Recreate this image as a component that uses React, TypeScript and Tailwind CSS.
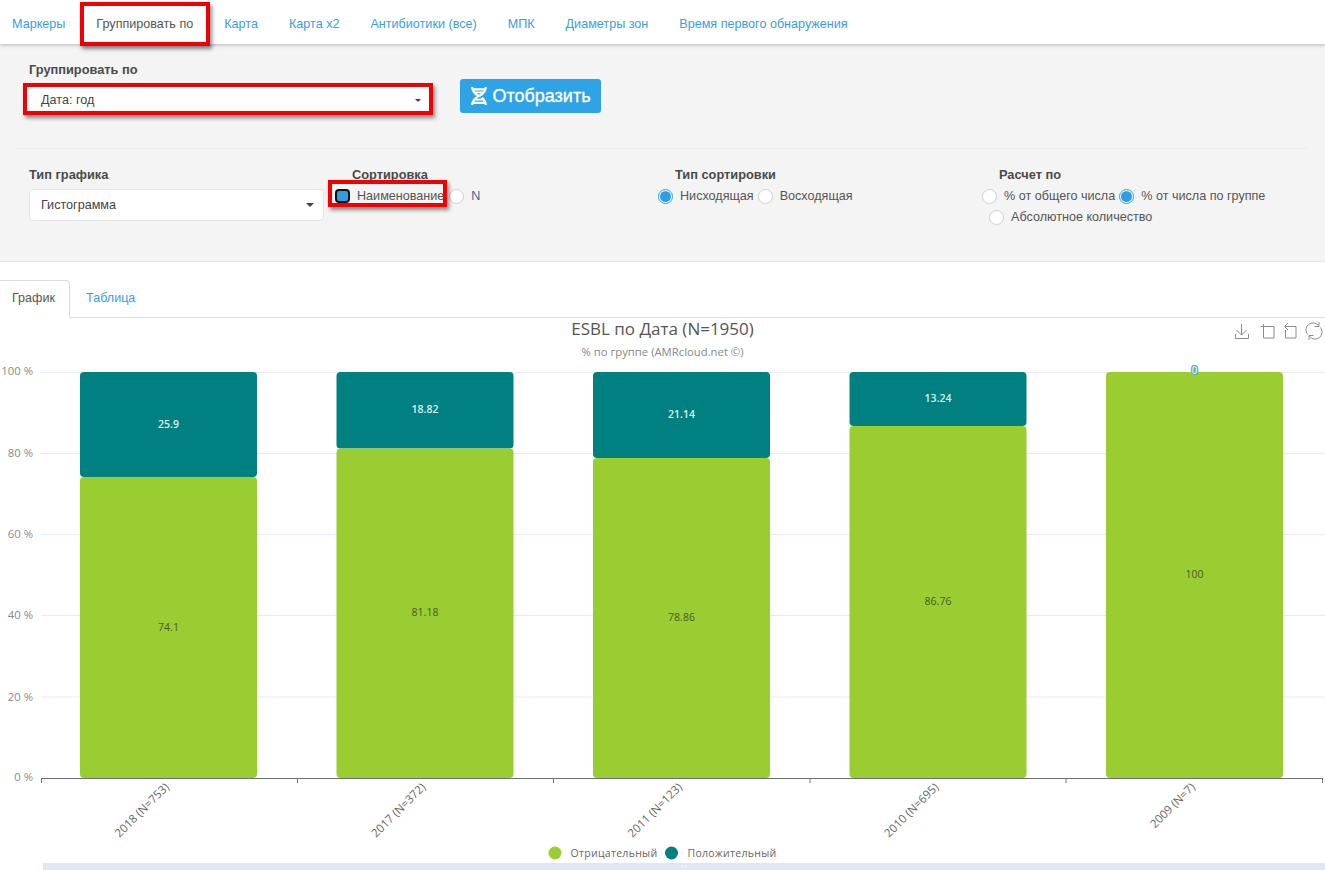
import { FaDna } from "react-icons/fa";

const tabs = [
  { t: "Маркеры" },
  { t: "Группировать по", active: true },
  { t: "Карта" },
  { t: "Карта x2" },
  { t: "Антибиотики (все)" },
  { t: "МПК" },
  { t: "Диаметры зон" },
  { t: "Время первого обнаружения" },
];

function RedBox({ className }: { className: string }) {
  return <div className={"absolute border-[4px] border-[#f00000] shadow-[2px_3px_4px_rgba(0,0,0,0.45)] pointer-events-none " + className} />;
}

function Radio({ on, focus, label, className = "", textClass = "text-[#555]" }: { on?: boolean; focus?: boolean; label: string; className?: string; textClass?: string }) {
  return (
    <label className={"flex items-center h-[22px] " + className}>
      {focus ? (
        <span className="w-[15px] h-[14px] rounded-[4px] bg-[#2c9fe3] border-[2px] border-[#111] shrink-0" />
      ) : (
        <span className={"w-[15px] h-[15px] rounded-full flex items-center justify-center shrink-0 bg-white border " + (on ? "border-[#2c9fe3]" : "border-[#cfcfcf]")}>
          {on && <span className="w-[11px] h-[11px] rounded-full bg-[#2c9fe3]" />}
        </span>
      )}
      <span className={"ml-[7px] whitespace-nowrap " + textClass}>{label}</span>
    </label>
  );
}

function Select({ text, className, caret }: { text: string; className: string; caret: string }) {
  return (
    <div className={"flex items-center justify-between bg-white border border-[#e6e6e6] rounded-[4px] pl-[11px] text-[#444] " + className}>
      <span>{text}</span>
      <span className={"w-0 h-0 border-x-transparent border-t-[#444] " + caret} />
    </div>
  );
}

const bars = [
  { x: 80, top: 477, a: "25.9", b: "74.1", l: "2018 (N=753)" },
  { x: 336.5, top: 448.5, a: "18.82", b: "81.18", l: "2017 (N=372)" },
  { x: 593, top: 458, a: "21.14", b: "78.86", l: "2011 (N=123)" },
  { x: 849.5, top: 426, a: "13.24", b: "86.76", l: "2010 (N=695)" },
  { x: 1106, top: 372, a: "", b: "100", l: "2009 (N=7)" },
];
const grid = [
  { y: 372.5, ly: 374.5, t: "100 %" },
  { y: 453.5, ly: 456.5, t: "80 %" },
  { y: 534.5, ly: 537.5, t: "60 %" },
  { y: 615.5, ly: 618.5, t: "40 %" },
  { y: 697, ly: 700.5, t: "20 %" },
  { y: 778, ly: 781, t: "0 %" },
];
const ticks = [41.5, 297.5, 553.5, 810, 1066, 1322.5];

function Chart() {
  return (
    <svg viewBox="0 318 1325 552" className="block w-[1325px] h-[552px]" style={{ fontFamily: '"Open Sans","Noto Sans",sans-serif' }}>
      <text x="662.5" y="335" textAnchor="middle" fontSize="17" fill="#555">ESBL по Дата (N=1950)</text>
      <text x="662.5" y="356" textAnchor="middle" fontSize="11.3" fill="#888">% по группе (AMRcloud.net ©)</text>
      {grid.map((g) => (
        <g key={g.t}>
          {g.y !== 778 && <line x1="41" x2="1325" y1={g.y} y2={g.y} stroke="#e6ebf3" />}
          <text x="33" y={g.ly} textAnchor="end" fontSize="11.3" fill="#8a8a8a">{g.t}</text>
        </g>
      ))}
      {bars.map((b) => (
        <g key={b.l}>
          {b.a && (
            <>
              <path d={`M${b.x} ${b.top - 4}V376a4 4 0 0 1 4-4H${b.x + 173}a4 4 0 0 1 4 4V${b.top - 4}a4 4 0 0 1-4 4H${b.x + 4}a4 4 0 0 1-4-4Z`} fill="#008080" />
              <text x={b.x + 88.5} y={(372 + b.top) / 2 + 3} textAnchor="middle" fontSize="10.5" fontWeight="600" fill="#dff0ea">{b.a}</text>
            </>
          )}
          <rect x={b.x} y={b.top} width="177" height={778 - b.top} rx="4" fill="#9acd32" />
          <text x={b.x + 88.5} y={(778 + b.top) / 2 + 3} textAnchor="middle" fontSize="10.5" fill="#4a5a2a">{b.b}</text>
          <text transform={`translate(${b.x + 87} 785) rotate(-45)`} textAnchor="end" x="0" y="4" fontSize="11.5" fill="#666">{b.l}</text>
        </g>
      ))}
      <text x="1194.5" y="374" textAnchor="middle" fontSize="10.5" fontWeight="600" fill="#cfeaf0" stroke="#5fb3b8" strokeWidth="2.4" style={{ paintOrder: "stroke" }}>0</text>
      <line x1="41" x2="1323" y1="778.5" y2="778.5" stroke="#6e7079" />
      {ticks.map((t) => (
        <line key={t} x1={t} x2={t} y1="778" y2="783" stroke="#6e7079" />
      ))}
      <g fill="none" stroke="#8c8c8c" strokeWidth="1">
        <path d="M1241.500 324v11M1236.500 330l5 5 5-5M1235.500 334v4.500h13V334" />
        <path d="M1263.500 324v14h10.500v-11.500h-13.500" />
        <path d="M1290 326.500h6v11.500h-10.500v-8M1288 323l-3.500 3.500 3.500 3.500M1285 326.500h5" />
        <path d="M1307.500 334.500A7 7 0 0 1 1318.500 325.500M1319 322v4.500h-4.500M1320.500 327.500A7 7 0 0 1 1309.500 336.500M1309 340v-4.500h4.500" />
      </g>
      <circle cx="555" cy="853" r="6.500" fill="#9acd32" />
      <text x="570.500" y="856.500" fontSize="10.500" letterSpacing="0.3" fill="#666">Отрицательный</text>
      <circle cx="671.500" cy="853" r="6.500" fill="#008080" />
      <text x="687.500" y="856.500" fontSize="10.500" letterSpacing="0.3" fill="#666">Положительный</text>
      <rect x="43" y="863" width="1282" height="7" fill="#dfe7f3" />
      <path d="M681 865.500h2v2h-2zM684.500 865.500h2v2h-2z" fill="#f4f6fa" />
    </svg>
  );
}

export default function App() {
  return (
    <div className="w-[1325px] h-[870px] overflow-hidden bg-white text-[12.6px] text-[#555]" style={{ fontFamily: '"Liberation Sans",Arial,sans-serif' }}>
      <nav className="relative z-10 h-[44px] bg-white shadow-[0_1px_4px_rgba(0,0,0,0.25)] flex items-center gap-[31px] pl-[12px]">
        {tabs.map((t) => (
          <div key={t.t} className={"relative h-full flex items-center pt-[4px] whitespace-nowrap " + (t.active ? "text-[#555]" : "text-[#3a9de0]")}>
            {t.t}
            {t.active && <RedBox className="left-[-16px] right-[-17px] top-[2px] bottom-[-2px]" />}
          </div>
        ))}
      </nav>

      <section className="h-[218px] bg-[#f4f4f4] border-b border-[#e3e3e3] pt-[19px] pl-[16px] pr-[17px]">
        <div className="flex items-start pl-[13px] h-[85px]">
          <div className="w-[431px]">
            <div className="font-bold text-[12.8px] h-[22px] leading-[14px] text-[#4a4a4a]">Группировать по</div>
            <div className="relative">
              <Select text="Дата: год" className="h-[30px] w-[400px] border-transparent pr-[7px]" caret="border-x-[3.5px] border-t-[3.5px]" />
              <RedBox className="left-[-6px] top-[-2px] w-[410px] h-[32px]" />
            </div>
          </div>
          <button className="mt-[16px] w-[141px] h-[34px] rounded-[3px] bg-[#2ea3e6] text-white text-[18px] flex items-center justify-center gap-[4px] [-webkit-text-stroke:0.3px_white]">
            <FaDna className="text-[18px]" />
            Отобразить
          </button>
        </div>
        <div className="border-t border-[#ececec] pt-[19px] grid grid-cols-4">
          <div className="pl-[13px]">
            <div className="font-bold text-[12.8px] h-[21px] leading-[14px] text-[#4a4a4a]">Тип графика</div>
            <Select text="Гистограмма" className="h-[32px] w-[295px] pr-[9px]" caret="border-x-[4px] border-t-[4px]" />
          </div>
          <div className="pl-[13px]">
            <div className="font-bold text-[12.8px] h-[17px] leading-[14px] text-[#4a4a4a]">Сортировка</div>
            <div className="relative flex -ml-[17px]">
              <Radio focus on label="Наименование" className="mr-[5px]" />
              <Radio label="N" textClass="text-[#336b8c]" />
              <RedBox className="left-[-7px] top-[-5px] w-[119px] h-[27px]" />
            </div>
          </div>
          <div className="pl-[13px]">
            <div className="font-bold text-[12.8px] h-[17px] leading-[14px] text-[#4a4a4a]">Тип сортировки</div>
            <div className="flex -ml-[17px]">
              <Radio on label="Нисходящая" className="mr-[4px]" />
              <Radio label="Восходящая" />
            </div>
          </div>
          <div className="pl-[14px]">
            <div className="font-bold text-[12.8px] h-[17px] leading-[14px] text-[#4a4a4a]">Расчет по</div>
            <div className="flex -ml-[17px]">
              <Radio label="% от общего числа" className="mr-[4px]" />
              <Radio on label="% от числа по группе" />
            </div>
            <Radio label="Абсолютное количество" className="-ml-[10px] -mt-px" />
          </div>
        </div>
      </section>

      <div className="h-[56px] flex items-end border-b border-[#ddd]">
        <div className="w-[70px] h-[38px] -mb-px bg-white border border-[#ddd] border-l-0 border-b-white rounded-tr-[4px] flex items-center pl-[12px] pb-[2px] text-[#555]">График</div>
        <div className="h-[37px] flex items-center pl-[16px] text-[#3a9de0]">Таблица</div>
      </div>
      <Chart />
    </div>
  );
}
